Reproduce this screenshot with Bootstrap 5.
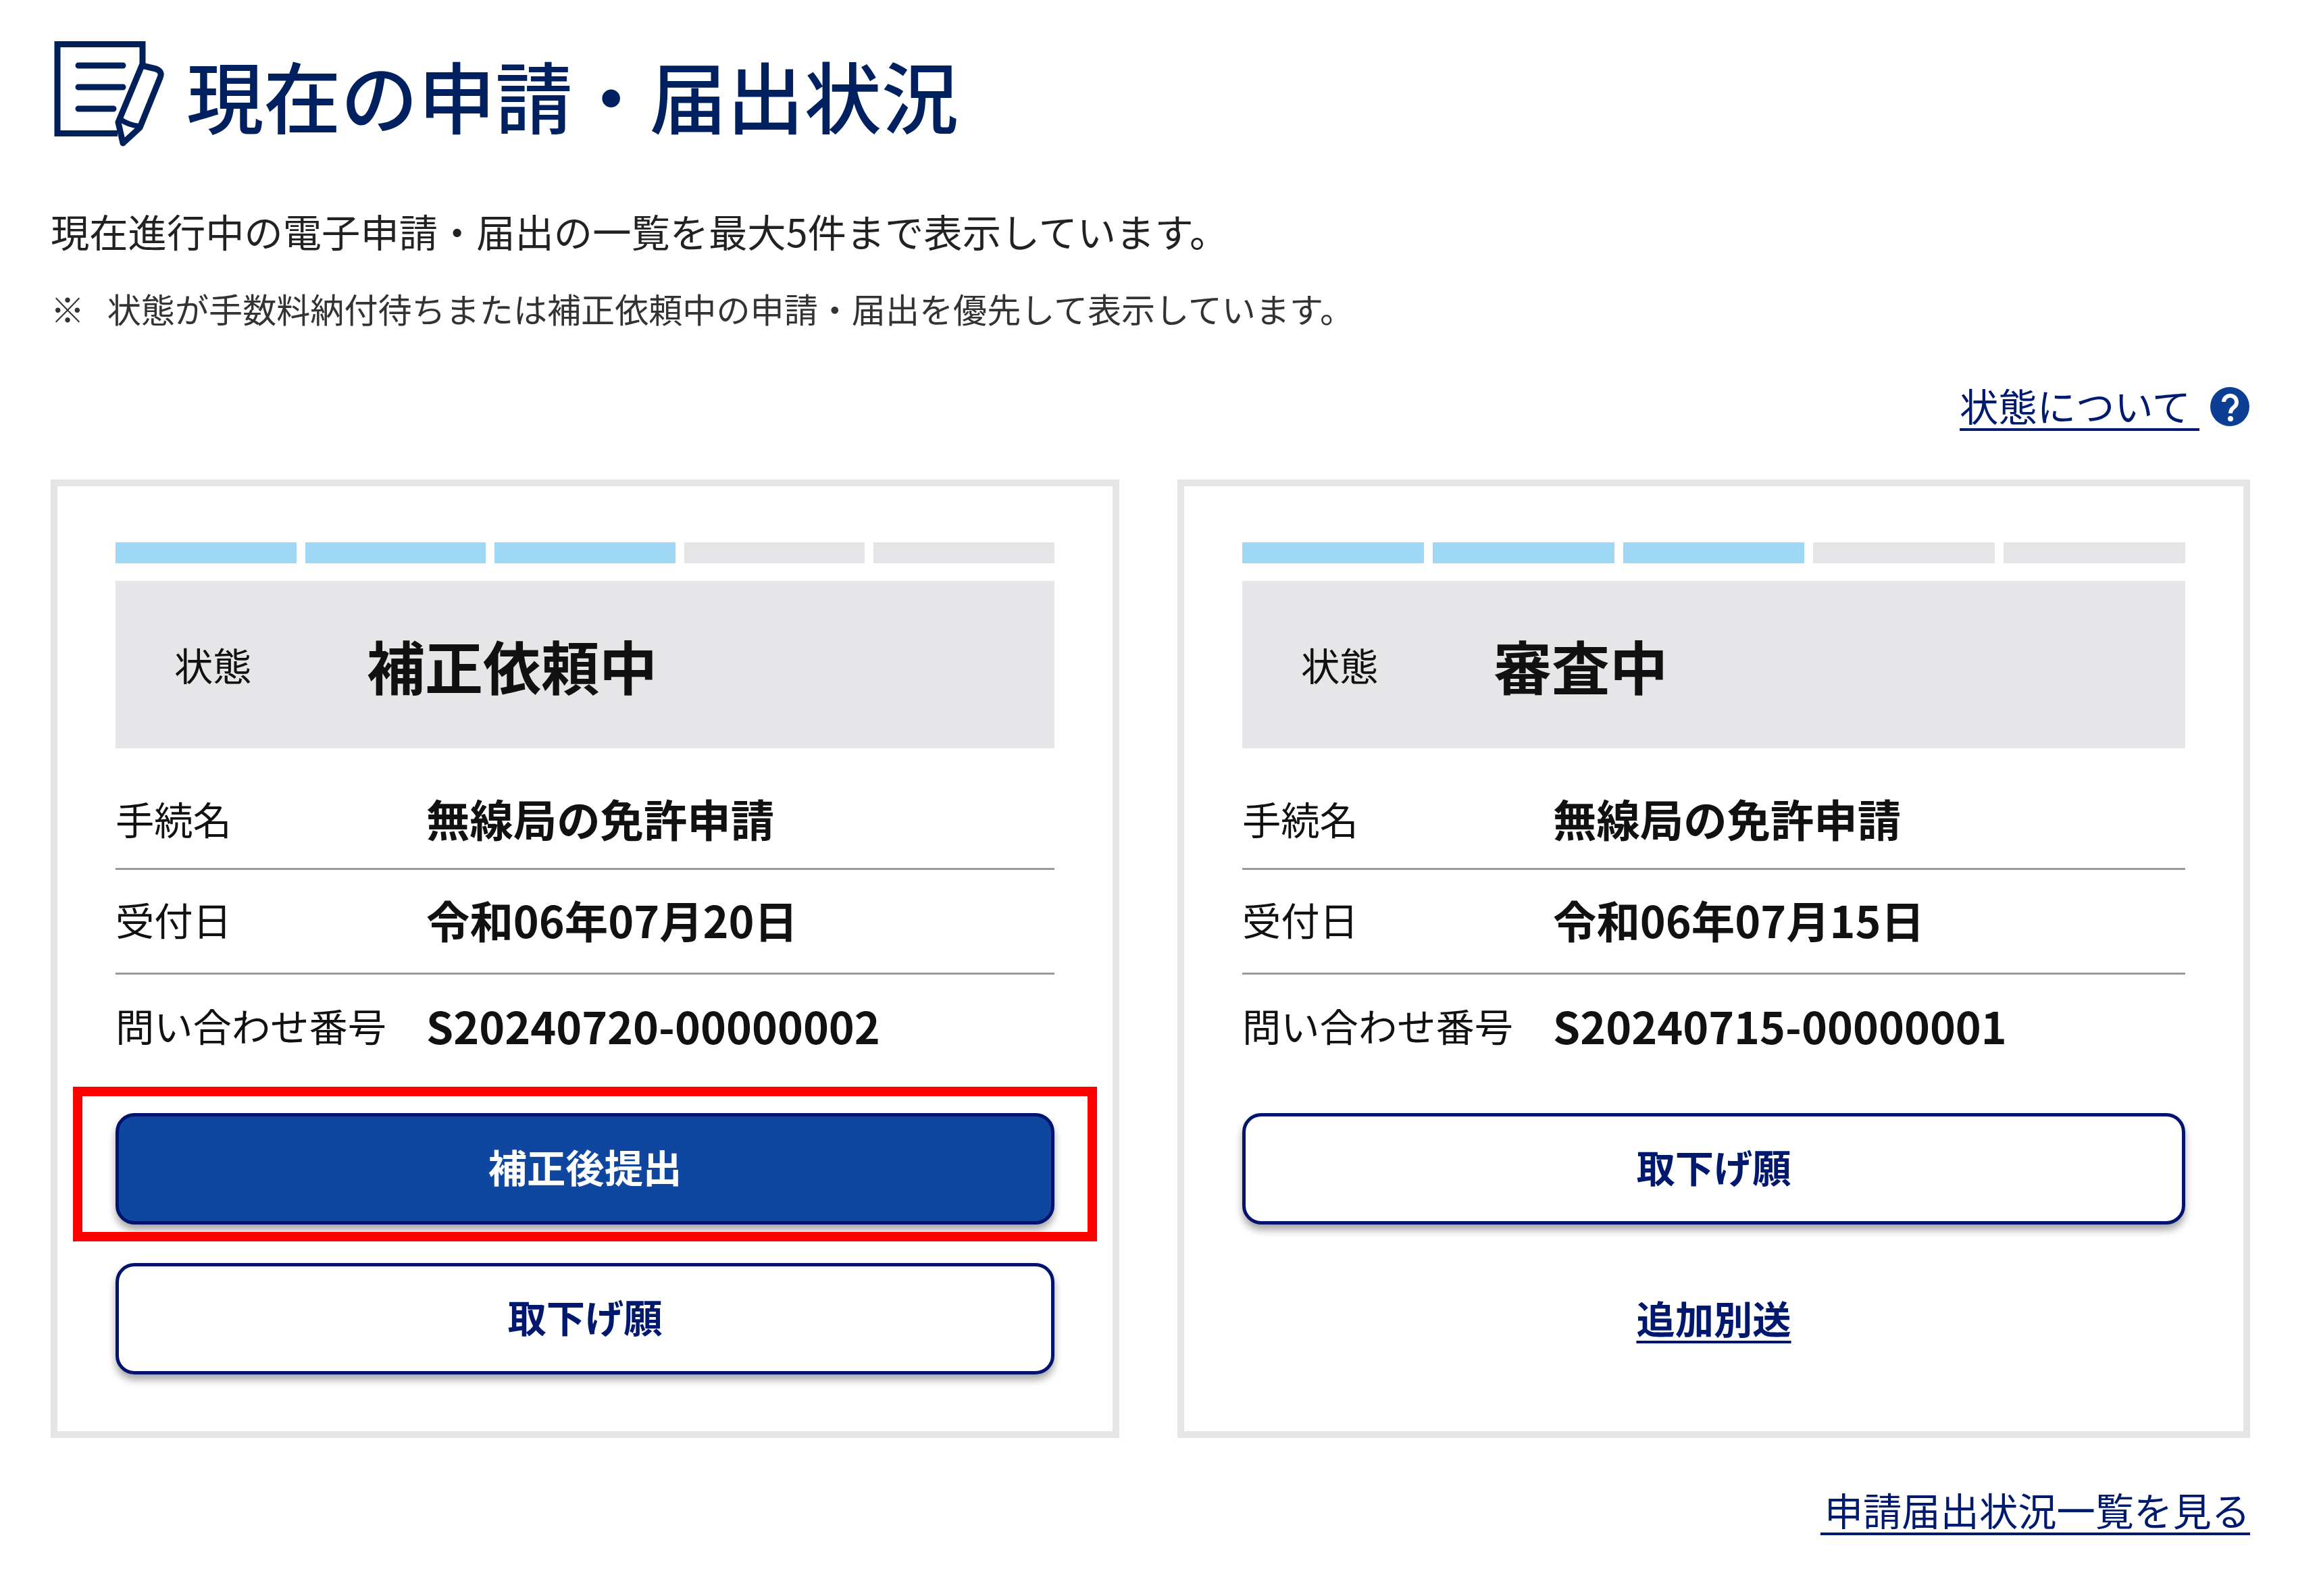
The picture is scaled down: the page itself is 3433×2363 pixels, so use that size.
<!doctype html>
<html lang="ja">
<head>
<meta charset="utf-8">
<title>現在の申請・届出状況</title>
<link href="https://cdn.jsdelivr.net/npm/bootstrap@5.3.0/dist/css/bootstrap.min.css" rel="stylesheet">
<style>
html, body { background: #fff; }
body { font-family: "Noto Sans CJK JP", "Noto Sans", sans-serif; color: #222; }
.page-wrap { padding: 60px 102px 0 75px; }
.title-row { height: 158px; }
.title-icon { width: 165px; height: 160px; flex: none; margin-left: 3px; }
.title-text { font-size: 114.300px; line-height: 158px; font-weight: 500; color: #002060; margin: 0 0 0 33px; white-space: nowrap; }
.lead-line { font-size: 57.300px; line-height: 80px; margin: 84px 0 0; white-space: nowrap; }
.note-line { font-size: 50.100px; line-height: 70px; margin: 39px 0 0; color: #333; white-space: nowrap; }
.help-row { height: 60px; margin-top: 81px; }
.help-row .navy-link { margin-bottom: 4px; }
.navy-link { color: #001a70; text-decoration: underline; text-decoration-thickness: 4px; text-underline-offset: 10px; font-size: 57.300px; line-height: 60px; white-space: pre; }
.help-icon { width: 60px; height: 60px; flex: none; margin-left: 15px; }
.card-pair { display: grid; grid-template-columns: 1582fr 1588fr; gap: 86px; margin-top: 78px; }
.app-card { border: 10px solid #e5e5e8; border-radius: 0; padding: 83px 86px 84px; }
.step-bar { display: flex; gap: 13px; height: 31px; margin-bottom: 26px; }
.step-seg { flex: 1 1 0; background: #e5e5e8; }
.step-seg.is-on { background: #9fd8f4; }
.status-box { display: flex; align-items: center; height: 248px; background: #e6e6e8; padding-left: 87px; color: #111; }
.status-label { width: 285px; flex: none; font-size: 57.300px; }
.status-value { font-size: 86px; font-weight: 700; }
.info-rows { margin-top: 30px; margin-bottom: 51px; }
.info-row { display: flex; align-items: center; height: 155px; padding-bottom: 6px; border-bottom: 3px solid #999; color: #111; }
.info-row:first-child { height: 150px; padding-bottom: 0; }
.info-row:last-child { border-bottom: 0; height: 154px; padding-bottom: 4px; }
.info-label { width: 460px; flex: none; font-size: 57.300px; white-space: nowrap; }
.info-value { font-size: 64.400px; font-weight: 700; white-space: nowrap; }
.act-btn { display: flex; align-items: center; justify-content: center; width: 100%; height: 165px; padding: 0 12px 8px; border-radius: 28px; border: 5px solid #00136e; font-size: 57.300px; font-weight: 700; box-shadow: 0 8px 12px rgba(0,0,0,.35); background: #fff; color: #00196e; }
.act-btn.is-main { background: #0e46a0; color: #fff; border-color: #00136e; }
.act-btn:hover { background: #fff; color: #00196e; border-color: #00136e; }
.act-btn.is-main:hover { background: #0e46a0; color: #fff; }
.act-stack { display: flex; flex-direction: column; gap: 57px; }
.act-plain { display: flex; align-items: center; justify-content: center; height: 165px; padding-bottom: 4px; }
.act-plain a { font-weight: 700; color: #00196e; }
.flag-frame { inset: -39px -63px -25px -63px; border: 14px solid #f00; pointer-events: none; }
.foot-row { margin-top: 66px; line-height: 80px; }
.foot-row .navy-link { line-height: 80px; word-spacing: -7px; }
</style>
</head>
<body>
<main class="page-wrap">
  <div class="d-flex align-items-center title-row">
    <svg class="title-icon" viewBox="18 20 165 160" fill="none" stroke="#00205b" stroke-width="9" stroke-linejoin="round" stroke-linecap="round" aria-hidden="true">
      <path stroke-linecap="butt" stroke-linejoin="miter" d="M151 56V26.500H25V158.500H114"/>
      <path stroke-width="9" d="M56 58H122M56 90H122M56 122H108"/>
      <path stroke-width="9" d="M150 58L171 63Q181 67 177 76L147 150L122 173L115 142Z"/>
      <path stroke-width="8" d="M117 137Q130 146 146 148"/>
    </svg>
    <h1 class="title-text">現在の申請・届出状況</h1>
  </div>
  <p class="lead-line">現在進行中の電子申請・届出の一覧を最大5件まで表示しています。</p>
  <p class="note-line">※&nbsp;&nbsp;&nbsp;状態が手数料納付待ちまたは補正依頼中の申請・届出を優先して表示しています。</p>
  <div class="d-flex justify-content-end align-items-center help-row">
    <a href="#" class="navy-link">状態について </a>
    <svg class="help-icon" viewBox="0 0 60 60" aria-hidden="true">
      <circle cx="30" cy="30" r="29" fill="#0c3f93"/>
      <path d="M21 23a9.500 9.500 0 1 1 15 8q-5 3.500-5 9" fill="none" stroke="#fff" stroke-width="6"/>
      <circle cx="31" cy="48" r="4" fill="#fff"/>
    </svg>
  </div>

  <div class="card-pair">
    <section class="card app-card">
      <div class="step-bar"><span class="step-seg is-on"></span><span class="step-seg is-on"></span><span class="step-seg is-on"></span><span class="step-seg"></span><span class="step-seg"></span></div>
      <div class="status-box"><span class="status-label">状態</span><span class="status-value">補正依頼中</span></div>
      <div class="info-rows">
        <div class="info-row"><span class="info-label">手続名</span><span class="info-value">無線局の免許申請</span></div>
        <div class="info-row"><span class="info-label">受付日</span><span class="info-value">令和06年07月20日</span></div>
        <div class="info-row"><span class="info-label">問い合わせ番号</span><span class="info-value">S20240720-00000002</span></div>
      </div>
      <div class="act-stack">
        <div class="position-relative">
          <button type="button" class="btn act-btn is-main">補正後提出</button>
          <div class="position-absolute flag-frame"></div>
        </div>
        <button type="button" class="btn act-btn">取下げ願</button>
      </div>
    </section>
    <section class="card app-card">
      <div class="step-bar"><span class="step-seg is-on"></span><span class="step-seg is-on"></span><span class="step-seg is-on"></span><span class="step-seg"></span><span class="step-seg"></span></div>
      <div class="status-box"><span class="status-label">状態</span><span class="status-value">審査中</span></div>
      <div class="info-rows">
        <div class="info-row"><span class="info-label">手続名</span><span class="info-value">無線局の免許申請</span></div>
        <div class="info-row"><span class="info-label">受付日</span><span class="info-value">令和06年07月15日</span></div>
        <div class="info-row"><span class="info-label">問い合わせ番号</span><span class="info-value">S20240715-00000001</span></div>
      </div>
      <div class="act-stack">
        <button type="button" class="btn act-btn">取下げ願</button>
        <div class="act-plain"><a href="#" class="navy-link">追加別送</a></div>
      </div>
    </section>
  </div>

  <div class="d-flex justify-content-end foot-row">
    <a href="#" class="navy-link"> 申請届出状況一覧を見る</a>
  </div>
</main>
<script src="https://cdn.jsdelivr.net/npm/bootstrap@5.3.0/dist/js/bootstrap.bundle.min.js"></script>
</body>
</html>
